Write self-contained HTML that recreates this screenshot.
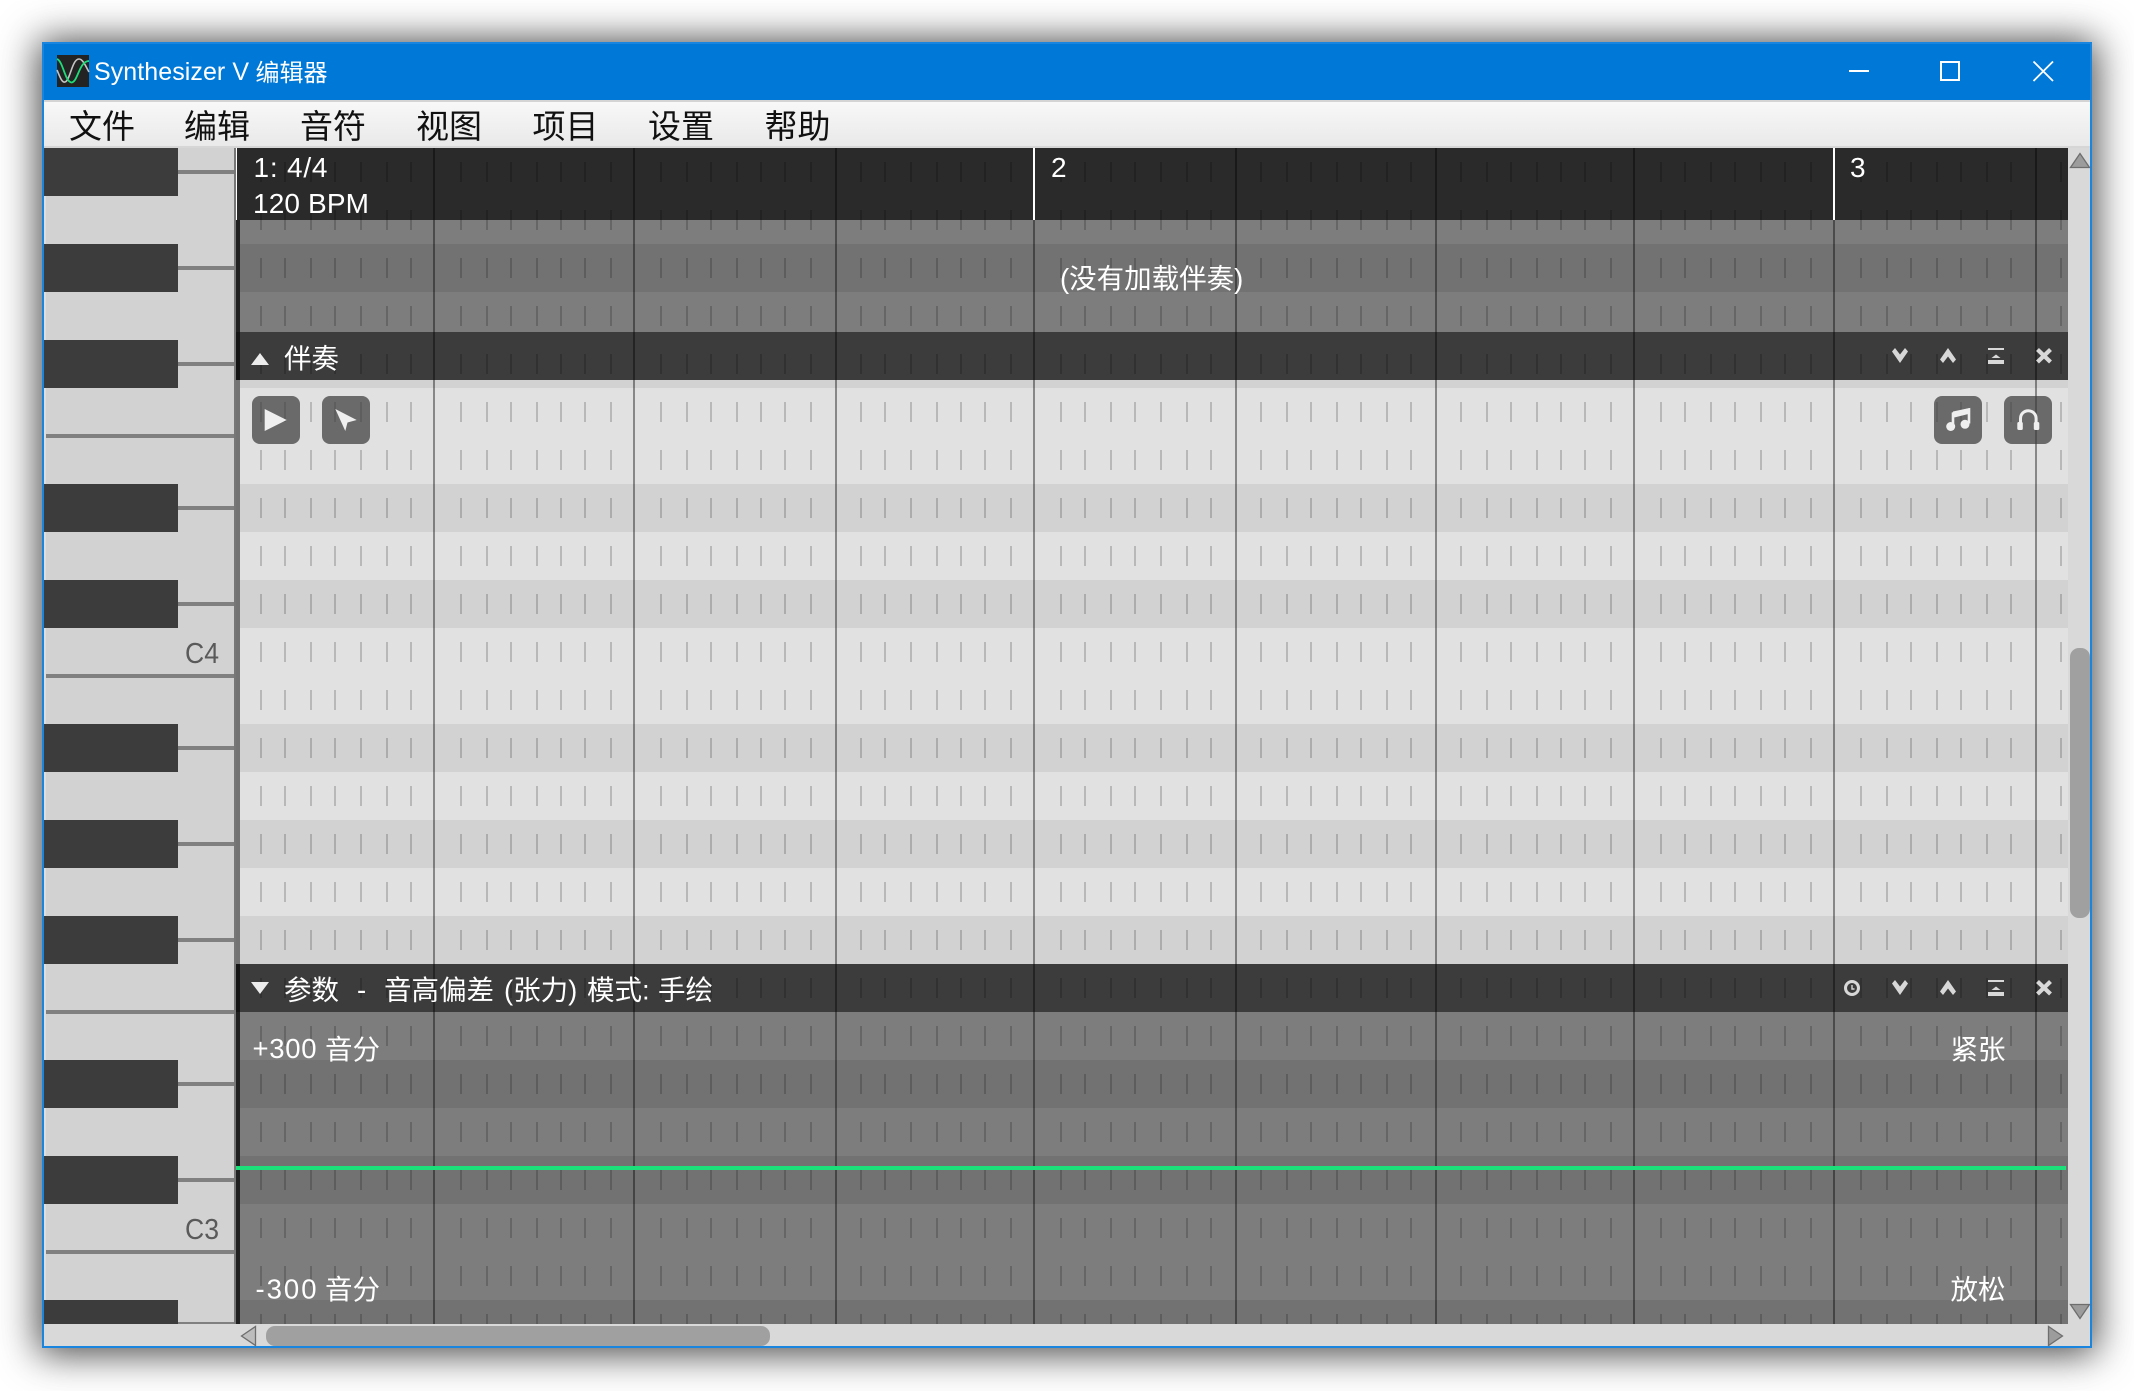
<!DOCTYPE html>
<html lang="zh-CN">
<head>
<meta charset="utf-8">
<title>Synthesizer V 编辑器</title>
<style>
html,body{margin:0;padding:0;background:#fff;width:2134px;height:1391px;overflow:hidden}
#win{position:absolute;left:42px;top:42px;width:2050px;height:1306px;box-shadow:0 2px 36px 4px rgba(0,0,0,.72)}
svg{position:absolute;left:0;top:0;display:block}
text{font-family:"Liberation Sans","Noto Sans CJK SC",sans-serif}
</style>
</head>
<body>
<div id="win"></div>
<svg width="2134" height="1391" viewBox="0 0 2134 1391" xmlns="http://www.w3.org/2000/svg">
<defs>
<linearGradient id="m" x1="0" y1="0" x2="0" y2="1"><stop offset="0" stop-color="#f8f8f8"/><stop offset="1" stop-color="#e9e9e9"/></linearGradient>
<pattern id="t" patternUnits="userSpaceOnUse" x="0" y="148" width="2134" height="48">
<path stroke="#000" stroke-opacity=".18" stroke-width="2" fill="none" d="M261 14v20M285 14v20M311 14v20M335 14v20M361 14v20M387 14v20M411 14v20M461 14v20M487 14v20M511 14v20M537 14v20M561 14v20M585 14v20M611 14v20M661 14v20M687 14v20M711 14v20M737 14v20M761 14v20M785 14v20M811 14v20M861 14v20M885 14v20M911 14v20M937 14v20M961 14v20M985 14v20M1011 14v20M1061 14v20M1085 14v20M1111 14v20M1135 14v20M1161 14v20M1187 14v20M1211 14v20M1261 14v20M1287 14v20M1311 14v20M1337 14v20M1361 14v20M1387 14v20M1411 14v20M1461 14v20M1487 14v20M1511 14v20M1537 14v20M1561 14v20M1585 14v20M1611 14v20M1661 14v20M1685 14v20M1711 14v20M1735 14v20M1761 14v20M1785 14v20M1811 14v20M1861 14v20M1887 14v20M1911 14v20M1937 14v20M1961 14v20M1987 14v20M2011 14v20M2061 14v20"/>
</pattern>
</defs>

<!-- window frame -->
<rect x="42" y="42" width="2050" height="1306" fill="#1a85de"/>
<rect x="44" y="44" width="2046" height="56" fill="#0078d7"/>
<rect x="44" y="100" width="2046" height="2" fill="#d4d4d4"/>
<rect x="44" y="102" width="2046" height="44" fill="url(#m)"/>
<rect x="44" y="146" width="2046" height="2" fill="#d6d6d6"/>

<!-- title bar -->
<rect x="57" y="55" width="32" height="32" fill="#232323"/>
<path d="M57 70C60 77 62 83 65 82C70 81 72 59 79 59C83 59 86 67 89 72" fill="none" stroke="#c4c4c4" stroke-width="1.6"/>
<path d="M57 59C63 61 65 82 71.5 82.5C78 82 79 61 89 61" fill="none" stroke="#1fdc78" stroke-width="1.8"/>
<text x="94" y="80" font-size="25" fill="#fff" textLength="155" lengthAdjust="spacing">Synthesizer V</text>
<text x="255.500" y="81" font-size="24" fill="#fff">编辑器</text>
<rect x="1849" y="70" width="20" height="2" fill="#fff"/>
<rect x="1941" y="62" width="18" height="18" fill="none" stroke="#fff" stroke-width="2"/>
<path d="M2033.5 61.5L2053 81M2053 61.5L2033.5 81" stroke="#fff" stroke-width="1.8" fill="none"/>

<!-- menu -->
<g font-size="33" fill="#111">
<text x="69" y="138">文件</text>
<text x="184" y="138">编辑</text>
<text x="300" y="138">音符</text>
<text x="416" y="138">视图</text>
<text x="532.500" y="138">项目</text>
<text x="648" y="138">设置</text>
<text x="764.500" y="138">帮助</text>
</g>

<!-- piano -->
<rect x="44" y="148" width="190" height="1176" fill="#d2d2d2"/>
<rect x="44" y="148" width="2" height="1176" fill="#dedede"/>
<g fill="#808080">
<rect x="178" y="170" width="56" height="4"/><rect x="178" y="266" width="56" height="4"/><rect x="178" y="362" width="56" height="4"/>
<rect x="46" y="434" width="188" height="4"/>
<rect x="178" y="506" width="56" height="4"/><rect x="178" y="602" width="56" height="4"/>
<rect x="46" y="674" width="188" height="4"/>
<rect x="178" y="746" width="56" height="4"/><rect x="178" y="842" width="56" height="4"/><rect x="178" y="938" width="56" height="4"/>
<rect x="46" y="1010" width="188" height="4"/>
<rect x="178" y="1082" width="56" height="4"/><rect x="178" y="1178" width="56" height="4"/>
<rect x="46" y="1250" width="188" height="4"/>
<rect x="178" y="1322" width="56" height="2"/>
</g>
<g fill="#3c3c3c">
<rect x="44" y="148" width="134" height="48"/><rect x="44" y="244" width="134" height="48"/><rect x="44" y="340" width="134" height="48"/>
<rect x="44" y="484" width="134" height="48"/><rect x="44" y="580" width="134" height="48"/>
<rect x="44" y="724" width="134" height="48"/><rect x="44" y="820" width="134" height="48"/><rect x="44" y="916" width="134" height="48"/>
<rect x="44" y="1060" width="134" height="48"/><rect x="44" y="1156" width="134" height="48"/>
<rect x="44" y="1300" width="134" height="24"/>
</g>
<text x="185" y="663" font-size="29" fill="#5a5a5a" textLength="34" lengthAdjust="spacingAndGlyphs">C4</text>
<text x="185" y="1239" font-size="29" fill="#5a5a5a" textLength="34" lengthAdjust="spacingAndGlyphs">C3</text>

<!-- grid background -->
<rect x="234" y="148" width="2" height="1176" fill="#777"/>
<rect x="236" y="148" width="4" height="72" fill="#2a2a2a"/>
<rect x="236" y="220" width="4" height="112" fill="#202020"/>
<rect x="236" y="332" width="4" height="48" fill="#141414"/>
<rect x="236" y="380" width="4" height="584" fill="#737373"/>
<rect x="236" y="964" width="4" height="48" fill="#141414"/>
<rect x="236" y="1012" width="4" height="312" fill="#202020"/>

<rect x="240" y="148" width="1828" height="72" fill="#2a2a2a"/>
<rect x="240" y="220" width="1828" height="112" fill="#7d7d7d"/>
<rect x="240" y="244" width="1828" height="48" fill="#727272"/>
<rect x="240" y="332" width="1828" height="48" fill="#3c3c3c"/>
<rect x="240" y="380" width="1828" height="584" fill="#e1e1e1"/>
<g fill="#d2d2d2">
<rect x="240" y="380" width="1828" height="8"/>
<rect x="240" y="484" width="1828" height="48"/>
<rect x="240" y="580" width="1828" height="48"/>
<rect x="240" y="724" width="1828" height="48"/>
<rect x="240" y="820" width="1828" height="48"/>
<rect x="240" y="916" width="1828" height="48"/>
</g>
<rect x="240" y="964" width="1828" height="48" fill="#3c3c3c"/>
<rect x="240" y="1012" width="1828" height="312" fill="#7d7d7d"/>
<g fill="#727272">
<rect x="240" y="1060" width="1828" height="48"/>
<rect x="240" y="1156" width="1828" height="48"/>
<rect x="240" y="1300" width="1828" height="24"/>
</g>

<!-- ticks and beat lines -->
<rect x="240" y="148" width="1828" height="1176" fill="url(#t)"/>
<g fill="#000" fill-opacity=".4">
<rect x="433" y="148" width="2" height="1176"/>
<rect x="633" y="148" width="2" height="1176"/>
<rect x="835" y="148" width="2" height="1176"/>
<rect x="1033" y="220" width="2" height="1104"/>
<rect x="1235" y="148" width="2" height="1176"/>
<rect x="1435" y="148" width="2" height="1176"/>
<rect x="1633" y="148" width="2" height="1176"/>
<rect x="1833" y="220" width="2" height="1104"/>
<rect x="2035" y="148" width="2" height="1176"/>
</g>
<g fill="#fff">
<rect x="236" y="148" width="1" height="72"/>
<rect x="1033" y="148" width="2" height="72"/>
<rect x="1833" y="148" width="2" height="72"/>
</g>

<!-- timeline text -->
<g font-size="28" fill="#fff">
<text x="253.500" y="177" textLength="74" lengthAdjust="spacing">1: 4/4</text>
<text x="253" y="213" textLength="116" lengthAdjust="spacing">120 BPM</text>
<text x="1051" y="177">2</text>
<text x="1850" y="177">3</text>
</g>
<text x="1060" y="288" font-size="27.5" fill="#fff">(没有加载伴奏)</text>

<!-- panel headers -->
<path d="M251 365L260 353L269 365Z" fill="#ececec"/>
<text x="284" y="368" font-size="27.5" fill="#fff">伴奏</text>
<path d="M251 982H269L260 994Z" fill="#ececec"/>
<g font-size="27.5" fill="#fff">
<text x="284" y="999.500">参数</text>
<text x="357" y="999.500">-</text>
<text x="384" y="999.500">音高偏差</text>
<text x="504" y="999.500">(张力)</text>
<text x="587" y="999.500">模式:</text>
<text x="658" y="999.500">手绘</text>
</g>

<!-- panel header icons -->
<g fill="#d8d8d8">
<path d="M1892 351.500L1895 348L1900 354.500L1905 348L1908 351.500L1900 363Z"/>
<path d="M1940 359.500L1948 348L1956 359.500L1953 363L1948 356.500L1943 363Z"/>
<rect x="1988" y="348" width="16" height="2"/>
<path d="M1991.500 358H2000.500L1996 354.500Z"/>
<rect x="1988" y="360" width="16" height="4"/>
<path d="M2037.500 349.500L2050.500 362M2050.500 349.500L2037.500 362" stroke="#d8d8d8" stroke-width="4.200" fill="none"/>
</g>
<g fill="#d8d8d8" transform="translate(0,632)">
<path d="M1892 351.500L1895 348L1900 354.500L1905 348L1908 351.500L1900 363Z"/>
<path d="M1940 359.500L1948 348L1956 359.500L1953 363L1948 356.500L1943 363Z"/>
<rect x="1988" y="348" width="16" height="2"/>
<path d="M1991.500 358H2000.500L1996 354.500Z"/>
<rect x="1988" y="360" width="16" height="4"/>
<path d="M2037.500 349.500L2050.500 362M2050.500 349.500L2037.500 362" stroke="#d8d8d8" stroke-width="4.200" fill="none"/>
</g>
<circle cx="1852" cy="988" r="6.500" fill="none" stroke="#d8d8d8" stroke-width="3"/>
<path d="M1852 985V989H1854.500" fill="none" stroke="#d8d8d8" stroke-width="1.400"/>

<!-- toolbar buttons -->
<g fill="#3c3c3c" fill-opacity=".72">
<rect x="252" y="396" width="48" height="48" rx="8"/>
<rect x="322" y="396" width="48" height="48" rx="8"/>
<rect x="1934" y="396" width="48" height="48" rx="8"/>
<rect x="2004" y="396" width="48" height="48" rx="8"/>
</g>
<path d="M264.700 409L286.700 420L264.700 431Z" fill="#efefef"/>
<path d="M335.300 409L356.700 420L347.500 422.500L345.300 431Z" fill="#efefef"/>
<path d="M1953 426V413.500L1969 409.500V423.500M1953 416.500L1969 412.500" fill="none" stroke="#efefef" stroke-width="2.600"/>
<path d="M1953 411.500L1969.500 408V413L1953 416.500Z" fill="#efefef"/>
<circle cx="1950.700" cy="426.500" r="4.500" fill="#efefef"/>
<circle cx="1965" cy="424.300" r="4.500" fill="#efefef"/>
<path d="M2020.500 424V418.500a7.800 7.800 0 0 1 15.600 0V424" fill="none" stroke="#efefef" stroke-width="3"/>
<rect x="2017.300" y="422" width="5.500" height="8" rx="1.500" fill="#efefef"/>
<rect x="2033.800" y="422" width="5.500" height="8" rx="1.500" fill="#efefef"/>

<!-- parameter panel -->
<g font-size="27.5" fill="#fff">
<text x="252.500" y="1058" textLength="64" lengthAdjust="spacing">+300</text>
<text x="325" y="1059">音分</text>
<text x="255.500" y="1298.500" textLength="61" lengthAdjust="spacing">-300</text>
<text x="325" y="1299">音分</text>
<text x="1950.500" y="1059">紧张</text>
<text x="1950.500" y="1299">放松</text>
</g>
<rect x="236" y="1166" width="1830" height="4" fill="#1ce07a"/>

<!-- scrollbars -->
<rect x="2068" y="148" width="22" height="1176" fill="#d9d9d9"/>
<rect x="44" y="1324" width="2046" height="22" fill="#d9d9d9"/>
<rect x="2070" y="648" width="20" height="270" rx="9" fill="#a0a0a0"/>
<rect x="266" y="1326" width="504" height="20" rx="9" fill="#a0a0a0"/>
<g stroke="#6e6e6e" stroke-width="1.300">
<path d="M2080 153.500L2070.500 167.500H2089.500Z" fill="#9c9c9c"/>
<path d="M2070.500 1304.500H2089.500L2080 1318.500Z" fill="#9c9c9c"/>
<path d="M241.500 1336L255.500 1326.500V1345.500Z" fill="#bdbdbd"/>
<path d="M2062.500 1336L2048.500 1326.500V1345.500Z" fill="#9c9c9c"/>
</g>
</svg>
</body>
</html>
